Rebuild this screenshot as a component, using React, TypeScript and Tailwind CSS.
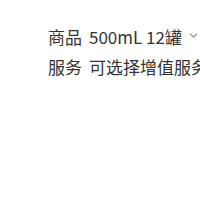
import { ChevronDown } from 'lucide-react'

export default function App() {
  return (
    <div
      className="h-[200px] w-[200px] overflow-hidden bg-white pl-[48px] pt-[22px] text-[17px] text-[#333333]"
      style={{ fontFamily: '"Noto Sans CJK SC", "Noto Sans", sans-serif' }}
    >
      <div className="flex h-[30px] items-center whitespace-nowrap">
        <span className="w-[41px] shrink-0">商品</span>
        <span>500mL 12罐</span>
        <ChevronDown className="mb-[3px] ml-[5px] h-[13px] w-[13px] shrink-0 text-[#888888]" strokeWidth={2} />
      </div>
      <div className="flex h-[30px] items-center whitespace-nowrap">
        <span className="w-[41px] shrink-0">服务</span>
        <span>可选择增值服务</span>
      </div>
    </div>
  )
}
